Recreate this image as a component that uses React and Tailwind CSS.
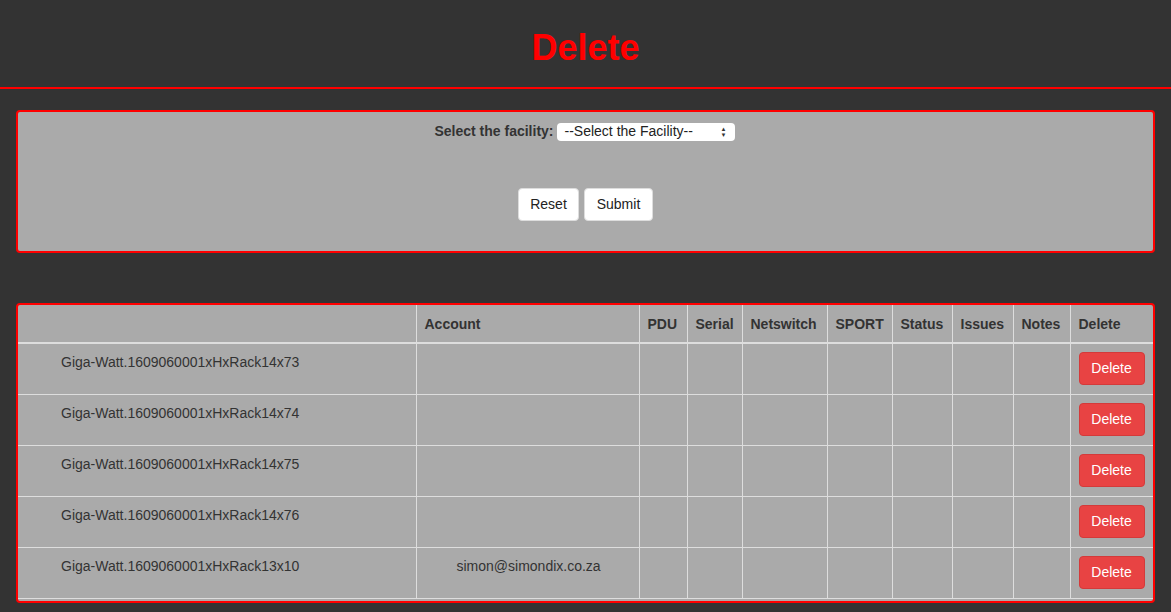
import React from "react";

const rows = [
  { name: "Giga-Watt.1609060001xHxRack14x73", account: "" },
  { name: "Giga-Watt.1609060001xHxRack14x74", account: "" },
  { name: "Giga-Watt.1609060001xHxRack14x75", account: "" },
  { name: "Giga-Watt.1609060001xHxRack14x76", account: "" },
  { name: "Giga-Watt.1609060001xHxRack13x10", account: "simon@simondix.co.za" },
];

const cols = [
  { label: "", w: "w-[398px]" },
  { label: "Account", w: "w-[223px]" },
  { label: "PDU", w: "w-[48px]" },
  { label: "Serial", w: "w-[55px]" },
  { label: "Netswitch", w: "w-[85px]" },
  { label: "SPORT", w: "w-[65px]" },
  { label: "Status", w: "w-[60px]" },
  { label: "Issues", w: "w-[61px]" },
  { label: "Notes", w: "w-[57px]" },
  { label: "Delete", w: "w-[83px]" },
];

const App = () => {
  return (
    <div className="min-h-screen bg-[#333333] font-['Liberation_Sans',Arial,sans-serif] text-[14px] text-[#333]">
      {/* header */}
      <div className="h-[87px] flex items-center justify-center">
        <h1 className="text-[36px] font-bold text-[#ff0000] mt-[8px]">Delete</h1>
      </div>
      <div className="h-[2px] bg-[#ff0000]" />

      {/* form */}
      <div className="mx-[16px] mt-[21px] h-[143px] bg-[#aaaaaa] border-2 border-[#ff0000] rounded-[4px] flex flex-col items-center pt-[9px]">
        <div className="flex items-center gap-[3px] -ml-[2px]">
          <label className="font-bold">Select the facility:</label>
          <div className="w-[178px] h-[18px] bg-white rounded-[4px] flex items-center justify-between px-[8px] text-[14px] text-[#222]">
            <span>--Select the Facility--</span>
            <span className="flex flex-col text-[6px] leading-[6px] text-[#333]">
              <span>▲</span>
              <span>▼</span>
            </span>
          </div>
        </div>
        <div className="flex gap-[5px] mt-[46px]">
          <button className="w-[61px] h-[33px] bg-white border border-[#ddd] rounded-[4px] text-[#222]">Reset</button>
          <button className="w-[69px] h-[33px] bg-white border border-[#ddd] rounded-[4px] text-[#222]">Submit</button>
        </div>
      </div>

      {/* table */}
      <div className="mx-[16px] mt-[50px] bg-[#aaaaaa] border-2 border-[#ff0000] rounded-[4px] overflow-hidden pb-[2px]">
        <table className="w-full table-fixed border-collapse">
          <thead>
            <tr className="h-[38px] border-b-2 border-[#dddddd]">
              {cols.map((c, i) => (
                <th
                  key={i}
                  className={`${c.w} text-left font-bold px-[8px] pt-[2px] ${i > 0 ? "border-l border-[#dddddd]" : ""}`}
                >
                  {c.label}
                </th>
              ))}
            </tr>
          </thead>
          <tbody>
            {rows.map((r, idx) => (
              <tr key={idx} className="h-[51px] border-b border-[#dddddd] align-top">
                <td className="pl-[43px] pt-[8px] text-[#333]">{r.name}</td>
                <td className="pl-[40px] pt-[8px] border-l border-[#dddddd]">{r.account}</td>
                <td className="border-l border-[#dddddd]" />
                <td className="border-l border-[#dddddd]" />
                <td className="border-l border-[#dddddd]" />
                <td className="border-l border-[#dddddd]" />
                <td className="border-l border-[#dddddd]" />
                <td className="border-l border-[#dddddd]" />
                <td className="border-l border-[#dddddd]" />
                <td className="border-l border-[#dddddd] pl-[8px] pt-[8px]">
                  <button className="w-[66px] h-[33px] bg-[#e84343] border border-[#d43a3a] rounded-[4px] text-white">
                    Delete
                  </button>
                </td>
              </tr>
            ))}
          </tbody>
        </table>
      </div>
    </div>
  );
};

export default App;
